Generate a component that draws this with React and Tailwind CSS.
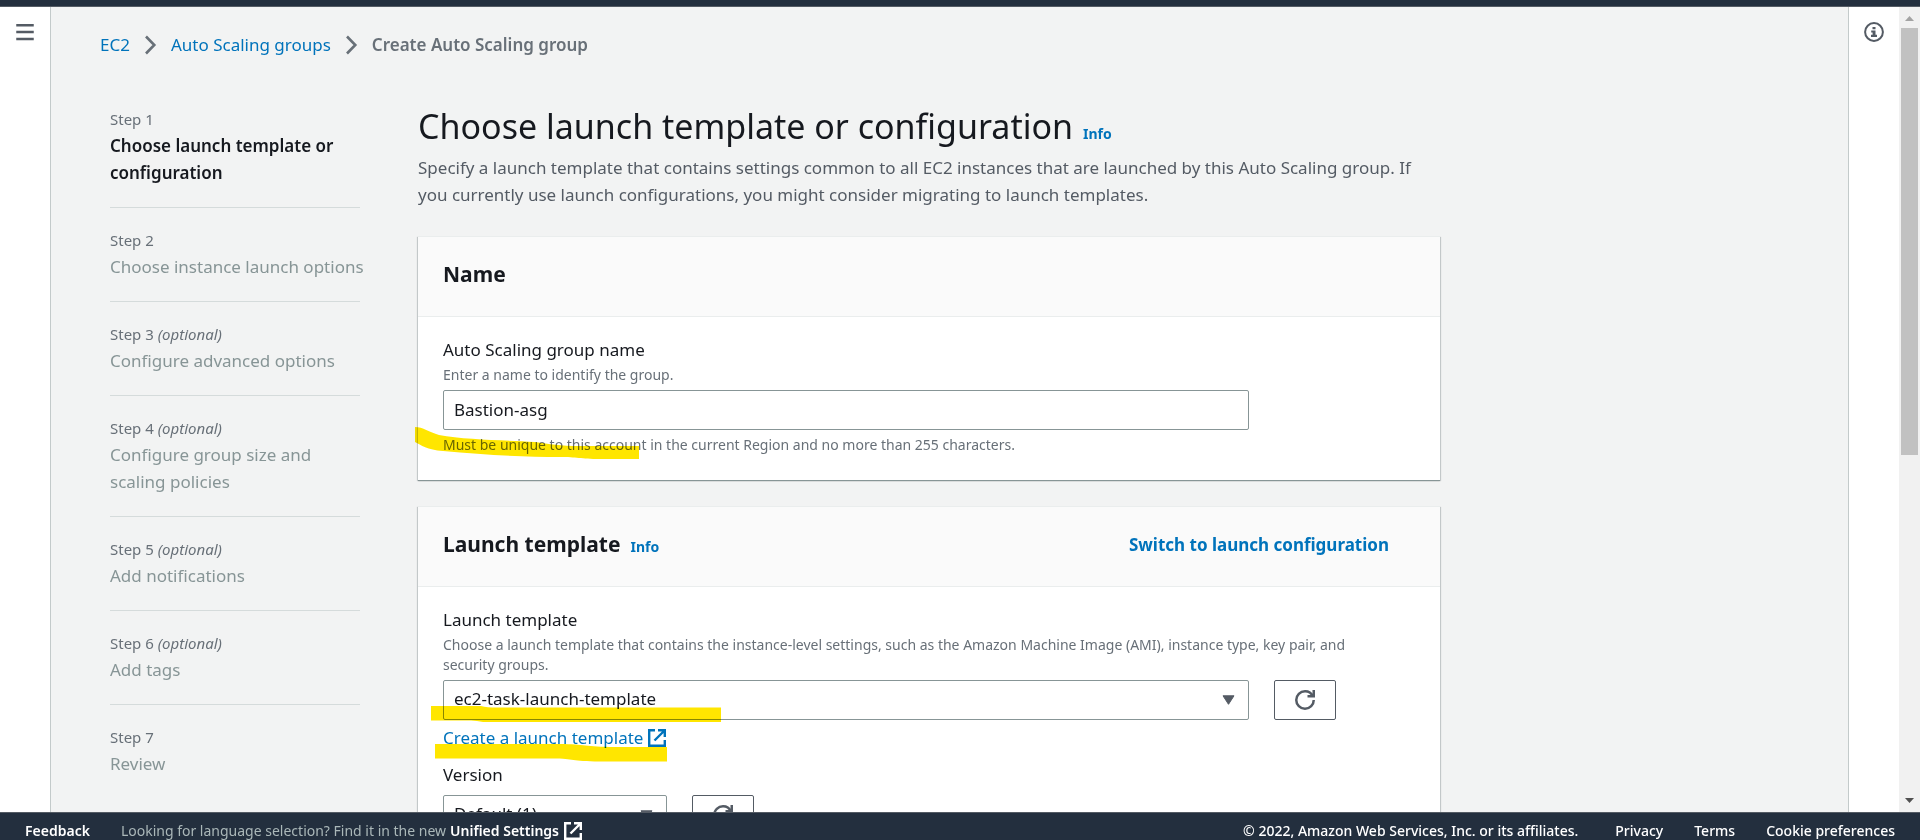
const steps = [
  { n: 1, title: "Choose launch template or configuration", active: true },
  { n: 2, title: "Choose instance launch options" },
  { n: 3, title: "Configure advanced options", optional: true },
  { n: 4, title: "Configure group size and scaling policies", optional: true },
  { n: 5, title: "Add notifications", optional: true },
  { n: 6, title: "Add tags", optional: true },
  { n: 7, title: "Review" },
];

function MenuIcon() {
  return (
    <svg className="h-5 w-5" viewBox="0 0 16 16" fill="none" stroke="#545b64" strokeWidth="2" aria-hidden="true">
      <path d="M1 2.5h14M1 8h14M1 13.5h14" />
    </svg>
  );
}

function InfoIcon() {
  return (
    <svg className="h-5 w-5" viewBox="0 0 20 20" fill="none" stroke="#545b64" strokeWidth="2" aria-hidden="true">
      <circle cx="10" cy="10" r="8.9" />
      <path fill="#545b64" stroke="none" d="M8.500 5h3v2.200h-3zM7.200 8.500h4.300v4.300H13V15H7v-2.200h1.600v-2.200H7.200z" />
    </svg>
  );
}

function ChevronIcon() {
  return (
    <svg className="h-5 w-[13px]" viewBox="0 0 13 20" fill="none" stroke="#687078" strokeWidth="2.6" aria-hidden="true">
      <path d="M2 1.500l8.300 8.500L2 18.500" />
    </svg>
  );
}

function ExternalIcon() {
  return (
    <svg className="h-[18px] w-[18px] shrink-0" viewBox="0 0 18 18" fill="none" stroke="currentColor" strokeWidth="2.4" aria-hidden="true">
      <path d="M7 1.2H1.2v15.6h15.6V11" />
      <path d="M10 1.2h6.8V8M16.5 1.5L6.5 11.5" />
    </svg>
  );
}

function RefreshIcon() {
  return (
    <svg className="h-5 w-5" viewBox="0 0 16 16" fill="none" stroke="#545b64" strokeWidth="2" aria-hidden="true">
      <path d="M10 5h5V0" />
      <path d="M15 8a7 7 0 0 1-14 0 7 7 0 0 1 7-7 6.9 6.9 0 0 1 6.3 4" />
    </svg>
  );
}

function RefreshButton({ label }) {
  return (
    <button type="button" aria-label={label} className="flex h-10 w-[62px] shrink-0 items-center justify-center rounded-[2px] border border-[#545b64] bg-white">
      <RefreshIcon />
    </button>
  );
}

function SelectBox({ id, value, className }) {
  return (
    <div className={"relative " + className}>
      <select id={id} defaultValue={value} className="h-10 w-full appearance-none rounded-[2px] border border-[#879596] bg-white px-[10px] pb-[2px] text-[17px] text-[#16191f]">
        <option>{value}</option>
      </select>
      <svg className="pointer-events-none absolute top-[15px] right-[14px] h-[10px] w-[13px]" viewBox="0 0 13 10" fill="#545b64" stroke="#545b64" strokeLinejoin="round" aria-hidden="true">
        <path d="M1 .8h11L6.500 9.300z" />
      </svg>
    </div>
  );
}

function Marker({ d, className }) {
  return (
    <svg className={"pointer-events-none absolute overflow-visible mix-blend-multiply " + className} width="300" height="34" viewBox="0 0 300 34" fill="#ffe600" aria-hidden="true">
      <path d={d} />
    </svg>
  );
}

function Card({ title, info, action, children }) {
  return (
    <section className="border-t border-[#eaeded] bg-white shadow-[0_1px_0_0_#879596,0_1px_1px_0_rgba(0,28,36,0.3),1px_1px_1px_0_rgba(0,28,36,0.15),-1px_1px_1px_0_rgba(0,28,36,0.15)]">
      <header className="flex h-20 items-center justify-between border-b border-[#eaeded] bg-[#fafafa] px-[25px] pb-1">
        <div className="flex items-baseline gap-[10px]">
          <h2 className="text-[21px] font-bold text-[#16191f]">{title}</h2>
          {info && <a href="#info" className="text-sm font-bold text-[#0073bb]">Info</a>}
        </div>
        {action}
      </header>
      <div className="px-[25px] pt-5 pb-[25px]">{children}</div>
    </section>
  );
}

function Steps() {
  return (
    <ol className="w-[254px] shrink-0">
      {steps.map((s) => (
        <li key={s.n} className="pt-[21px] first:pt-0">
          <div className="mb-px text-[15px] leading-[23px] text-[#687078]">
            Step {s.n} {s.optional && <i>(optional)</i>}
          </div>
          <div className={s.active ? "leading-[27px] font-semibold text-[#16191f]" : "leading-[27px] text-[#879596]"}>
            {s.title}
          </div>
          {s.n < steps.length && <hr className="mt-[21px] mr-1 border-[#d5dbdb]" />}
        </li>
      ))}
    </ol>
  );
}

function Scrollbar() {
  return (
    <div className="flex w-[21px] shrink-0 flex-col items-center bg-[#f1f1f1]" aria-hidden="true">
      <svg className="h-[21px] w-[17px] shrink-0" viewBox="0 0 17 21" fill="#a3a3a3"><path d="M4 14h9L8.500 9z" /></svg>
      <div className="min-h-0 w-full grow px-[2px]">
        <div className="h-[56%] bg-[#c1c1c1]" />
      </div>
      <svg className="h-[21px] w-[17px] shrink-0" viewBox="0 0 17 21" fill="#505050"><path d="M4 7h9l-4.500 5z" /></svg>
    </div>
  );
}

export default function App() {
  return (
    <div className="flex h-screen flex-col overflow-hidden bg-[#f2f3f3] font-['Noto_Sans','Open_Sans',sans-serif] text-[17px] text-[#16191f]">
      <div className="h-[7px] shrink-0 border-b border-[#545b64] bg-[#232f3e]" />

      <div className="flex min-h-0 grow">
        <nav className="w-[51px] shrink-0 border-r border-[#c3caca] bg-white pt-[15px] pl-[15px]">
          <button type="button" aria-label="Open navigation"><MenuIcon /></button>
        </nav>

        <main className="min-w-0 grow overflow-hidden px-[49px] pt-[25px]">
          <nav aria-label="Breadcrumb" className="flex h-[26px] items-center gap-[14px]">
            <a href="#ec2" className="text-[#0073bb]">EC2</a>
            <ChevronIcon />
            <a href="#groups" className="text-[#0073bb]">Auto Scaling groups</a>
            <ChevronIcon />
            <span className="font-semibold text-[#687078]">Create Auto Scaling group</span>
          </nav>

          <div className="flex items-start gap-[54px] pt-[50px] pl-[10px]">
            <Steps />

            <div className="w-full max-w-[1022px]">
              <div className="flex items-baseline gap-[10px]">
                <h1 className="text-[34px] leading-9">Choose launch template or configuration</h1>
                <a href="#info" className="text-sm font-bold text-[#0073bb]">Info</a>
              </div>
              <p className="mt-[10px] leading-[27px] text-[#545b64]">
                Specify a launch template that contains settings common to all EC2 instances that are launched by this Auto Scaling group. If you currently use launch configurations, you might consider migrating to launch templates.
              </p>

              <div className="mt-7 flex flex-col gap-[26px]">
                <Card title="Name">
                  <label htmlFor="asg-name" className="mb-[2px] block leading-[26px]">Auto Scaling group name</label>
                  <p className="pb-[5px] text-sm leading-5 text-[#687078]">Enter a name to identify the group.</p>
                  <input id="asg-name" defaultValue="Bastion-asg" className="block h-10 w-full max-w-[806px] rounded-[2px] border border-[#879596] bg-white px-[10px] pb-[2px] text-[17px]" />
                  <div className="relative mt-[5px]">
                    <p className="text-sm leading-5 text-[#687078]">Must be unique to this account in the current Region and no more than 255 characters.</p>
                    <Marker className="-top-2 -left-7" d="M0 0C8 0 14 5 24 8C50 13 90 13 120 15C135 17 145 19 165 19H224V32H185C165 32 162 30 145 30C110 30 70 28 28 24C12 23 6 18 0 15z" />
                  </div>
                </Card>

                <Card
                  title="Launch template"
                  info
                  action={<button type="button" className="px-[26px] font-bold text-[#0073bb]">Switch to launch configuration</button>}
                >
                  <label htmlFor="template" className="mb-[2px] block leading-[26px]">Launch template</label>
                  <p className="pr-10 pb-[5px] text-sm leading-5 text-[#687078]">
                    Choose a launch template that contains the instance-level settings, such as the Amazon Machine Image (AMI), instance type, key pair, and security groups.
                  </p>
                  <div className="relative flex gap-[25px]">
                    <SelectBox id="template" value="ec2-task-launch-template" className="w-full max-w-[806px]" />
                    <RefreshButton label="Refresh launch templates" />
                    <Marker className="top-[26px] -left-3" d="M0 0H50Q56 1.500 66 1.500H290V16H52Q46 14.500 40 14.500H0z" />
                  </div>
                  <div className="relative mt-1 flex">
                    <a href="#create" className="flex items-center gap-[5px] leading-[27px] text-[#0073bb]">
                      Create a launch template <ExternalIcon />
                    </a>
                    <Marker className="top-5 -left-2" d="M0 0H125C150 0 150 3 180 3H232V17.500H165C135 17.500 140 14.500 118 14.500H0z" />
                  </div>
                  <label htmlFor="version" className="mt-[11px] mb-[7px] block leading-[26px]">Version</label>
                  <div className="flex gap-[25px]">
                    <SelectBox id="version" value="Default (1)" className="w-56" />
                    <RefreshButton label="Refresh versions" />
                  </div>
                </Card>
              </div>
            </div>
          </div>
        </main>

        <aside className="w-[51px] shrink-0 border-l border-[#c3caca] bg-white pt-[15px] pl-[15px]">
          <button type="button" aria-label="Open help panel"><InfoIcon /></button>
        </aside>
        <Scrollbar />
      </div>

      <footer className="flex h-7 shrink-0 items-start justify-between overflow-hidden border-t border-[#545b64] bg-[#232f3e] px-[25px] pt-2 text-sm leading-5 whitespace-nowrap text-white">
        <div className="flex items-center gap-[31px]">
          <a href="#feedback" className="font-semibold">Feedback</a>
          <span className="flex items-center gap-1 text-[#aab7b8]">
            Looking for language selection? Find it in the new
            <a href="#settings" className="flex items-center gap-[5px] font-semibold text-white">Unified Settings <ExternalIcon /></a>
          </span>
        </div>
        <div className="flex items-center gap-[31px] font-medium">
          <span className="pr-[6px]">© 2022, Amazon Web Services, Inc. or its affiliates.</span>
          <a href="#privacy">Privacy</a>
          <a href="#terms">Terms</a>
          <a href="#cookies">Cookie preferences</a>
        </div>
      </footer>
    </div>
  );
}
